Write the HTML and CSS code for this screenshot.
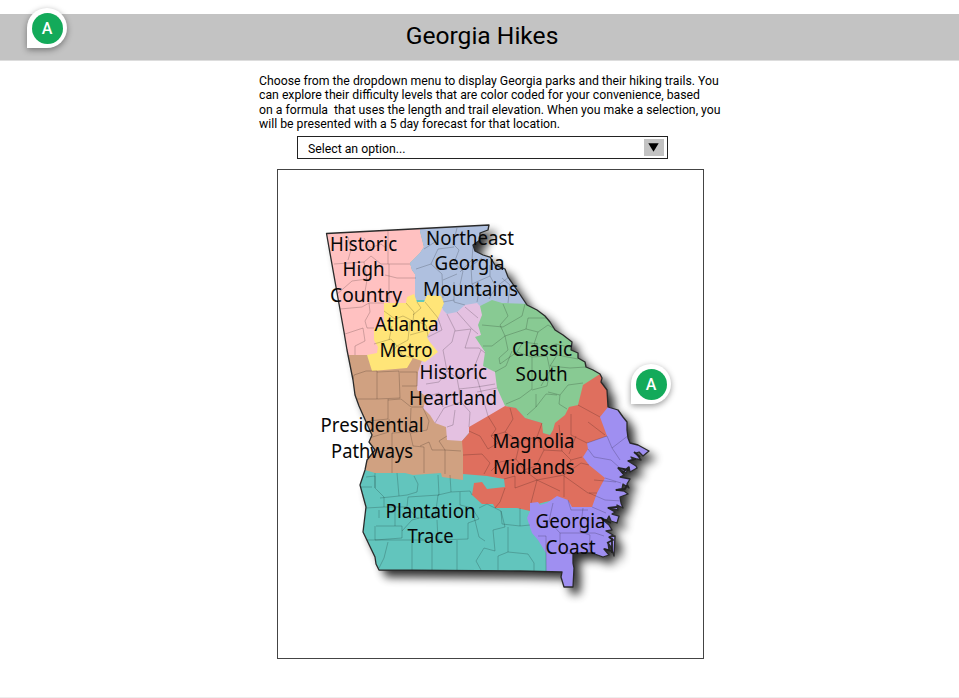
FILE: index.html
```html
<!DOCTYPE html>
<html lang="en">
<head>
<meta charset="utf-8">
<title>Georgia Hikes</title>
<link rel="stylesheet" href="styles.css">
</head>
<body>
<div class="page">
<header class="header">
  <h1 class="title">Georgia Hikes</h1>
  <div class="pin pin-header"><span class="pin-dot">A</span></div>
</header>
<main class="content">
  <p class="intro">Choose from the dropdown menu to display Georgia parks and their hiking trails. You<br>can explore their difficulty levels that are color coded for your convenience, based<br>on a formula&nbsp; that uses the length and trail elevation. When you make a selection, you<br>will be presented with a 5 day forecast for that location.</p>
  <div class="select">
    <span class="select-label">Select an option...</span>
    <span class="select-button"><svg width="11" height="9" viewBox="0 0 11 9"><path d="M.3 .3H10.700L5.500 8.800Z"/></svg></span>
  </div>
  <div class="map">
    <svg class="map-art" viewBox="278 170 425 488" width="425" height="488">
      <defs>
        <path id="state" d="M326.500 233.500L489 225L488 230L480 233L480 240L473 245L475 251L483 255L490 257L495 265L505 269L508 277L517 290L527 305L537 310L545 316L550 322L555 330L563 335L572 342L571 350L578 353L578 358L585 362L586 367L593 370L600 374L602 378L601 382L607 390L608 407L618 410L623 417L627 422L627 430L628 438L630 443L638 445L649 451L643 456L639 452L636 453L641 460L637 459L631 457L633 460L628 461L636 466L637 468L630 472L629 467L626 473L618 468L624 475L620 477L630 479L627 484L629 488L623 484L622 489L616 490L624 491L628 494L620 497L621 503L623 508L617 505L618 510L608 508L615 512L612 514L619 516L617 523L611 521L609 516L607 520L602 519L609 525L612 530L606 531L613 535L609 537L615 536L614 556L611 547L608 543L609 550L604 549L609 555L603 557L592 553L580 553L573 554L573 563L574 568L573 587L564 587L561 577L562 572L520 571L379 570L376 564L375 557L363 532L366 507L360 485L365 470L367 460L375 450L369 442L372 435L363 415L359 406L355 395L353 380L347 350L344 332Z"/>
        <clipPath id="state-clip"><use href="#state"/></clipPath>
        <filter id="blur-wide" x="-20%" y="-20%" width="140%" height="140%"><feGaussianBlur stdDeviation="5"/></filter>
      </defs>
      <use href="#state" class="shadow" transform="translate(7 7)"/>
      <g clip-path="url(#state-clip)">
        <use href="#state" fill="#62c5bd"/>
        <path fill="#ffc1c1" d="M320 225L420 225L420 231L424 247L420 253L410 263L412 270L415 274L416 295L416 306L384 306L386 327L378 330L380 355L367 355L340 356Z"/>
        <path fill="#d0a181" d="M340 355L367 355L372 366L400 362L430 350L455 430L464 441L463 480L442 477L441 473L413 475L405 473L375 473L365 470L350 470L330 400Z"/>
        <path fill="#e4c1e1" d="M430 325L438 308L457 308L465 303L479 302L486 308L486 325L490 343L500 372L503 388L508 408L488 420L472 429L469 433L462 441L447 440L446 427L435 423L430 415L423 408L427 397L417 390L418 372L422 360Z"/>
        <path fill="#afc0df" d="M420 231L420 222L495 222L535 306L502 306L492 302L480 306L477 303L465 305L457 312L447 314L443 310L440 300L415 300L415 274L412 270L410 263L420 253L424 247Z"/>
        <path fill="#ffe578" d="M384 303L406 303L407 297L414 294L417 302L424 302L427 295L441 296L444 303L438 318L427 337L429 341L438 352L425 362L413 358L407 368L372 371L367 355L377 353L378 347L374 340L374 328L384 327Z"/>
        <path fill="#88ca93" d="M480 306L492 300L502 303L530 304L610 370L600 374L586 388L582 410L570 412L568 420L558 425L553 433L546 435L542 431L542 423L525 418L516 408L505 406L497 388L495 372L483 366L485 352L475 337L481 335L478 325L482 315Z"/>
        <path fill="#df6f5e" d="M600 374L615 370L620 405L612 407L606 417L612 436L592 443L594 449L589 457L595 465L611 478L603 493L596 510L572 510L566 503L557 499L530 506L530 511L517 508L495 508L493 504L482 504L472 495L474 483L482 482L487 489L505 487L504 479L487 476L463 474L463 453L462 441L469 433L469 427L488 416L505 406L516 408L525 418L542 423L543 433L550 435L553 430L555 423L565 415L569 407L578 405L583 385Z"/>
        <path fill="#9f8ff1" d="M608 407L660 400L660 600L547 600L546 553L538 540L532 533L527 518L530 511L530 503L538 502L540 505L547 503L557 496L568 500L572 507L592 507L597 493L605 478L589 465L583 457L588 449L587 443L607 436L600 417Z"/>
        <g class="county">
          <path d="M348 237L351 250L348 260M388 231V264M334 264L364 262L371 256L381 264H410M364 238L370 248L381 244L386 248M389 264V303M385 275L397 278L416 278M364 262L367 280L363 303M336 295L352 281L367 279M340 309L362 307L369 303L384 303M369 303L370 312L365 321L367 328H374M345 334L363 328M363 328L365 341L355 346V355"/>
          <path d="M438 230L435 242L424 249M457 228L453 244L459 250L454 263L463 271L460 285M416 269L431 264L438 249L454 247M473 245L472 260L460 272M431 264L442 274L443 298M443 280L457 274M482 258L471 266L472 284L479 292L477 302M472 284L490 276L490 265M490 276L496 287L489 299M496 287L509 277M454 282L454 302L465 305M454 300L443 302M502 278L510 285L508 303"/>
          <path d="M406 303L414 312L413 321L403 316L395 319L384 311M417 302L421 308L413 315M425 302L438 318M410 321L408 340L397 346L391 339L374 344M414 320L426 325L428 336M392 326L389 340M398 346L402 355L413 358M390 354L397 346M410 335L424 331"/>
          <path d="M457 312L472 329L478 334M447 314L455 330L452 342L443 350M438 318L442 330L428 337M465 307L478 318M455 331L471 329L465 348L479 348L485 353M443 350L447 371L439 382L426 384M447 371L457 378L474 368L481 350M457 378L459 389L477 387L495 384M474 368L480 388L488 416M459 389L461 402L470 412L469 427M461 402L444 408L435 423M455 410L453 425L447 427M426 397L439 393L443 407M477 392L497 388"/>
          <path d="M353 379L354 375L366 371L377 371V399L355 399M377 372L399 371L400 398L377 399M400 372H417V386H402M388 399V419L369 421M388 400L401 399L411 407H424M369 438L389 432V419M392 433V473M392 433L410 432L411 408M410 432L413 446L424 447V473M411 433L427 430L429 421L423 408M420 446L429 442L432 450H445V474M445 450L461 451M375 453L391 449M445 450L439 441L447 436"/>
          <path d="M525 304L522 316L503 327L482 325M503 304L508 316L500 325L505 336L526 329L528 318L546 318M505 336L492 346H483M526 329L538 332L534 344L543 350L556 344L572 348M538 332L548 325L553 328M505 336L508 350L499 358L500 364L517 352L523 342L538 344M495 372L506 366L512 351M517 352L532 357L532 389L520 398L506 404M532 357L547 356L550 370L547 386L532 390M550 370L541 386M556 344L557 355L578 359M557 355L550 366L570 368L586 367M548 392L560 395L559 404L567 409M560 395L568 385L583 383M536 394V407L527 415M536 407L546 394L557 395"/>
          <path d="M488 416L496 429L491 436L498 443L488 449L480 436L469 431M463 455L482 454L490 463L484 474M491 436L505 432L513 419L510 408M505 432L520 442L516 459L500 462L491 471M516 459L524 470L536 466L544 450L537 437L521 441M537 437L542 423M544 450L562 451L571 460L564 475L537 480L515 488V476L504 479M524 470L537 480L531 503M562 451L559 425M571 435L587 443M571 435V414M564 475V497M564 476L588 493L597 493M564 475L581 463L589 465M578 405L600 417M571 460L582 457M505 488L500 502L495 508M537 480L560 491M588 422L605 435M576 436L569 454"/>
          <path d="M366 477L375 476V488L384 497V507M375 473V488M397 473L399 496L380 498M399 496L407 495L417 492L418 484L414 476M372 487H360M384 507L366 508M384 507H407L408 497L439 495L438 475M407 507L417 518L435 518L438 495M379 518V510M376 526H402V538L375 540V526M395 508V526M402 531L412 520L419 518M363 540L427 540M388 542L384 558L379 568M412 541V570M432 541V570M457 540V570M437 520L438 540M438 495L451 492L450 475M451 492L470 491L472 495M460 492L460 505L472 508L479 519L468 523L468 539L438 540M479 508L487 504L501 511L505 527L493 530L495 551M472 508L479 537L485 541M501 511L502 524L520 526L530 525M508 527V552L498 556L498 570M495 551L484 548L476 561L481 570M520 526V508M508 552L528 554L534 563V571"/>
          <path d="M587 443L607 436L612 448L629 435M588 449L594 457L611 460L620 468M594 480L616 482M589 493L605 500L622 501M553 503L549 521L560 533H595L604 536M560 533V552L573 554M546 536H538M583 508L580 532L590 535L589 552M568 500L571 510H588M605 478L621 483M612 448L620 460M546 536V571M592 507L606 513"/>
        </g>
      </g>
      <use href="#state" class="outline"/>
      <path class="inlets" d="M628 461L636 459M634 452L640 457M618 468L629 470M616 490L625 489L627 485M608 508L617 507M602 519L611 523M607 543L613 540L609 537M604 549L611 551M612 538V553M622 473L629 467"/>
      <g class="regions" transform="translate(-.4 -.2)">
        <text x="330.500" y="251" textLength="67" lengthAdjust="spacingAndGlyphs">Historic</text>
        <text x="343" y="276.500" textLength="42" lengthAdjust="spacingAndGlyphs">High</text>
        <text x="330.500" y="302" textLength="72" lengthAdjust="spacingAndGlyphs">Country</text>
        <text x="426.500" y="245" textLength="88" lengthAdjust="spacingAndGlyphs">Northeast</text>
        <text x="435" y="270.500" textLength="70" lengthAdjust="spacingAndGlyphs">Georgia</text>
        <text x="423.500" y="296" textLength="95" lengthAdjust="spacingAndGlyphs">Mountains</text>
        <text x="375" y="331.500" textLength="64" lengthAdjust="spacingAndGlyphs">Atlanta</text>
        <text x="380" y="357" textLength="53" lengthAdjust="spacingAndGlyphs">Metro</text>
        <text x="420" y="379.500" textLength="67.500" lengthAdjust="spacingAndGlyphs">Historic</text>
        <text x="409.500" y="405" textLength="88" lengthAdjust="spacingAndGlyphs">Heartland</text>
        <text x="512.500" y="356" textLength="60" lengthAdjust="spacingAndGlyphs">Classic</text>
        <text x="516" y="381.500" textLength="52" lengthAdjust="spacingAndGlyphs">South</text>
        <text x="321" y="432.500" textLength="103" lengthAdjust="spacingAndGlyphs">Presidential</text>
        <text x="331.500" y="458" textLength="82" lengthAdjust="spacingAndGlyphs">Pathways</text>
        <text x="493" y="448.500" textLength="82" lengthAdjust="spacingAndGlyphs">Magnolia</text>
        <text x="493.500" y="474" textLength="81.500" lengthAdjust="spacingAndGlyphs">Midlands</text>
        <text x="386" y="518" textLength="90" lengthAdjust="spacingAndGlyphs">Plantation</text>
        <text x="408" y="543.500" textLength="46" lengthAdjust="spacingAndGlyphs">Trace</text>
        <text x="536" y="528.500" textLength="70" lengthAdjust="spacingAndGlyphs">Georgia</text>
        <text x="546" y="554" textLength="50" lengthAdjust="spacingAndGlyphs">Coast</text>
      </g>
    </svg>
    <div class="pin pin-map"><span class="pin-dot">A</span></div>
  </div>
</main>
</div>
</body>
</html>
```
FILE: styles.css
```css
* { box-sizing: border-box; }
body { margin: 0; background: #fff; color: #000; font-family: Roboto, sans-serif; }
.page { height: 698px; padding-top: 14px; border-bottom: 1px solid #eee; overflow: hidden; }
.header { position: relative; height: 47px; background: #c3c3c3; border-bottom: 1px solid #ddd; }
.title { margin: 0; padding-left: 5px; font-size: 24.600px; font-weight: 400; line-height: 43px; text-align: center; }
.content { width: 480px; margin-left: 259px; padding-top: 13px; }
.intro { margin: 0; font-size: 12.260px; line-height: 14.300px; white-space: nowrap; }
.select { display: flex; align-items: center; justify-content: space-between; width: 371px; height: 23px; margin: 5px 0 0 38px; padding: 0 3px 0 10px; border: 1px solid #222; font-size: 12.260px; }
.select-label { padding-top: 2px; }
.select-button { display: flex; align-items: center; justify-content: center; width: 20px; height: 17px; margin-bottom: 1px; padding-right: 1px; background: #c3c3c3; }
.map { position: relative; width: 427px; height: 490px; margin: 10px 0 0 18px; border: 1px solid #444; }
.map-art { display: block; }
.shadow { fill: #000; opacity: .82; filter: url(#blur-wide); }
.outline { fill: none; stroke: #2a2a2a; stroke-width: 1.300; stroke-linejoin: round; }
.inlets { fill: none; stroke: #222; stroke-width: 1.800; stroke-linejoin: round; }
.county { fill: none; stroke: #000; stroke-opacity: .27; stroke-width: .7; stroke-linejoin: round; }
.regions { font: 19.500px "Noto Sans", sans-serif; fill: #080808; }
.pin { position: absolute; display: flex; align-items: center; justify-content: center; width: 40px; height: 40px; background: #fff; border-radius: 50% 50% 50% 0; box-shadow: 0 2px 6px rgba(0, 0, 0, .4); }
.pin-header { left: 27px; top: -6px; }
.pin-map { left: 353px; top: 194px; }
.pin-dot { width: 31px; height: 31px; border-radius: 50%; background: #13aa5a; color: #fff; font-size: 16px; font-weight: 500; line-height: 31px; text-align: center; }
```
